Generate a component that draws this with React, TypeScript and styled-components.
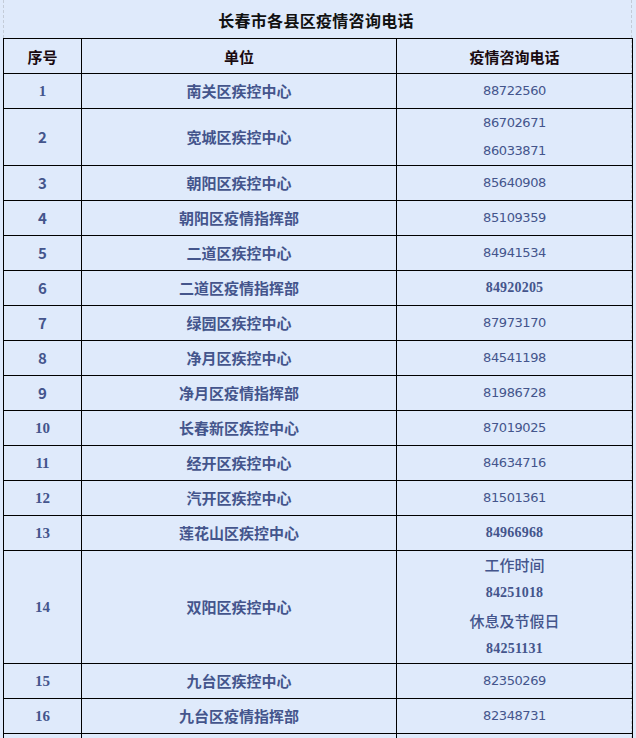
import React from "react";
import styled, { createGlobalStyle } from "styled-components";

const Global = createGlobalStyle`
  html, body {
    margin: 0;
    padding: 0;
    background: #dfeafb;
  }
  body {
    font-family: "Noto Sans CJK SC", "Liberation Sans", sans-serif;
  }
`;

const Page = styled.div`
  width: 629px;
  margin-left: 3px;
  border-right: 1px dashed #c4ccd8;
  padding-right: 2px;
  min-height: 738px;
  box-sizing: border-box;
  position: relative;
  &::before {
    content: "";
    position: absolute;
    left: 0;
    top: 0;
    height: 38px;
    border-left: 1px dashed #c4ccd8;
  }
`;

const Title = styled.h1`
  margin: 0;
  height: 38px;
  line-height: 40px;
  text-align: center;
  font-size: 16px;
  font-weight: 700;
  color: #111;
  letter-spacing: 0.3px;
`;

const Table = styled.table`
  width: 629px;
  border-collapse: collapse;
  table-layout: fixed;
  border: 1px solid #000;
`;

const Col = styled.col<{ $w: number }>`
  width: ${(p) => p.$w}px;
`;

const HeadCell = styled.th`
  border: 1px solid #000;
  height: 34px;
  padding: 0;
  font-size: 15px;
  font-weight: 700;
  color: #1a0a10;
  text-align: center;
  vertical-align: middle;
`;

const Cell = styled.td<{ $serif?: boolean }>`
  border: 1px solid #000;
  height: 34px;
  padding: 0;
  text-align: center;
  vertical-align: middle;
  color: #44558c;
  font-size: 15px;
  font-weight: 700;
  line-height: 28px;
  font-family: ${(p) =>
    p.$serif
      ? `"Liberation Serif", "Noto Sans CJK SC", serif`
      : `"Noto Sans CJK SC", "Liberation Sans", sans-serif`};
`;

const Phone = styled.div<{ $bold?: boolean }>`
  font-family: ${(p) =>
    p.$bold ? `"Liberation Serif", serif` : `"DejaVu Sans", "Liberation Sans", sans-serif`};
  font-size: ${(p) => (p.$bold ? "14px" : "13px")};
  font-weight: ${(p) => (p.$bold ? 700 : 400)};
  line-height: 28px;
  letter-spacing: ${(p) => (p.$bold ? "0.2px" : "-0.4px")};
`;

const Label = styled.div`
  font-size: 15px;
  font-weight: 500;
  line-height: 28px;
`;

type Line = { kind: "phone" | "label"; text: string; bold?: boolean };
type Row = { no: string; serifNo: boolean; unit: string; lines: Line[] };

const p = (text: string, bold?: boolean): Line => ({ kind: "phone", text, bold });
const l = (text: string): Line => ({ kind: "label", text });

const rows: Row[] = [
  { no: "1", serifNo: true, unit: "南关区疾控中心", lines: [p("88722560")] },
  { no: "2", serifNo: false, unit: "宽城区疾控中心", lines: [p("86702671"), p("86033871")] },
  { no: "3", serifNo: false, unit: "朝阳区疾控中心", lines: [p("85640908")] },
  { no: "4", serifNo: false, unit: "朝阳区疫情指挥部", lines: [p("85109359")] },
  { no: "5", serifNo: false, unit: "二道区疾控中心", lines: [p("84941534")] },
  { no: "6", serifNo: false, unit: "二道区疫情指挥部", lines: [p("84920205", true)] },
  { no: "7", serifNo: false, unit: "绿园区疾控中心", lines: [p("87973170")] },
  { no: "8", serifNo: false, unit: "净月区疾控中心", lines: [p("84541198")] },
  { no: "9", serifNo: false, unit: "净月区疫情指挥部", lines: [p("81986728")] },
  { no: "10", serifNo: true, unit: "长春新区疾控中心", lines: [p("87019025")] },
  { no: "11", serifNo: true, unit: "经开区疾控中心", lines: [p("84634716")] },
  { no: "12", serifNo: true, unit: "汽开区疾控中心", lines: [p("81501361")] },
  { no: "13", serifNo: true, unit: "莲花山区疾控中心", lines: [p("84966968", true)] },
  {
    no: "14",
    serifNo: true,
    unit: "双阳区疾控中心",
    lines: [l("工作时间"), p("84251018", true), l("休息及节假日"), p("84251131", true)],
  },
  { no: "15", serifNo: true, unit: "九台区疾控中心", lines: [p("82350269")] },
  { no: "16", serifNo: true, unit: "九台区疫情指挥部", lines: [p("82348731")] },
];

export default function App() {
  return (
    <>
      <Global />
      <Page>
        <Title>长春市各县区疫情咨询电话</Title>
        <Table>
          <colgroup>
            <Col $w={78} />
            <Col $w={315} />
            <Col $w={236} />
          </colgroup>
          <thead>
            <tr>
              <HeadCell>序号</HeadCell>
              <HeadCell>单位</HeadCell>
              <HeadCell>疫情咨询电话</HeadCell>
            </tr>
          </thead>
          <tbody>
            {rows.map((r) => (
              <tr key={r.no}>
                <Cell $serif={r.serifNo}>{r.no}</Cell>
                <Cell>{r.unit}</Cell>
                <Cell>
                  {r.lines.map((ln, i) =>
                    ln.kind === "phone" ? (
                      <Phone key={i} $bold={ln.bold}>
                        {ln.text}
                      </Phone>
                    ) : (
                      <Label key={i}>{ln.text}</Label>
                    )
                  )}
                </Cell>
              </tr>
            ))}
            <tr>
              <Cell />
              <Cell />
              <Cell />
            </tr>
          </tbody>
        </Table>
      </Page>
    </>
  );
}
